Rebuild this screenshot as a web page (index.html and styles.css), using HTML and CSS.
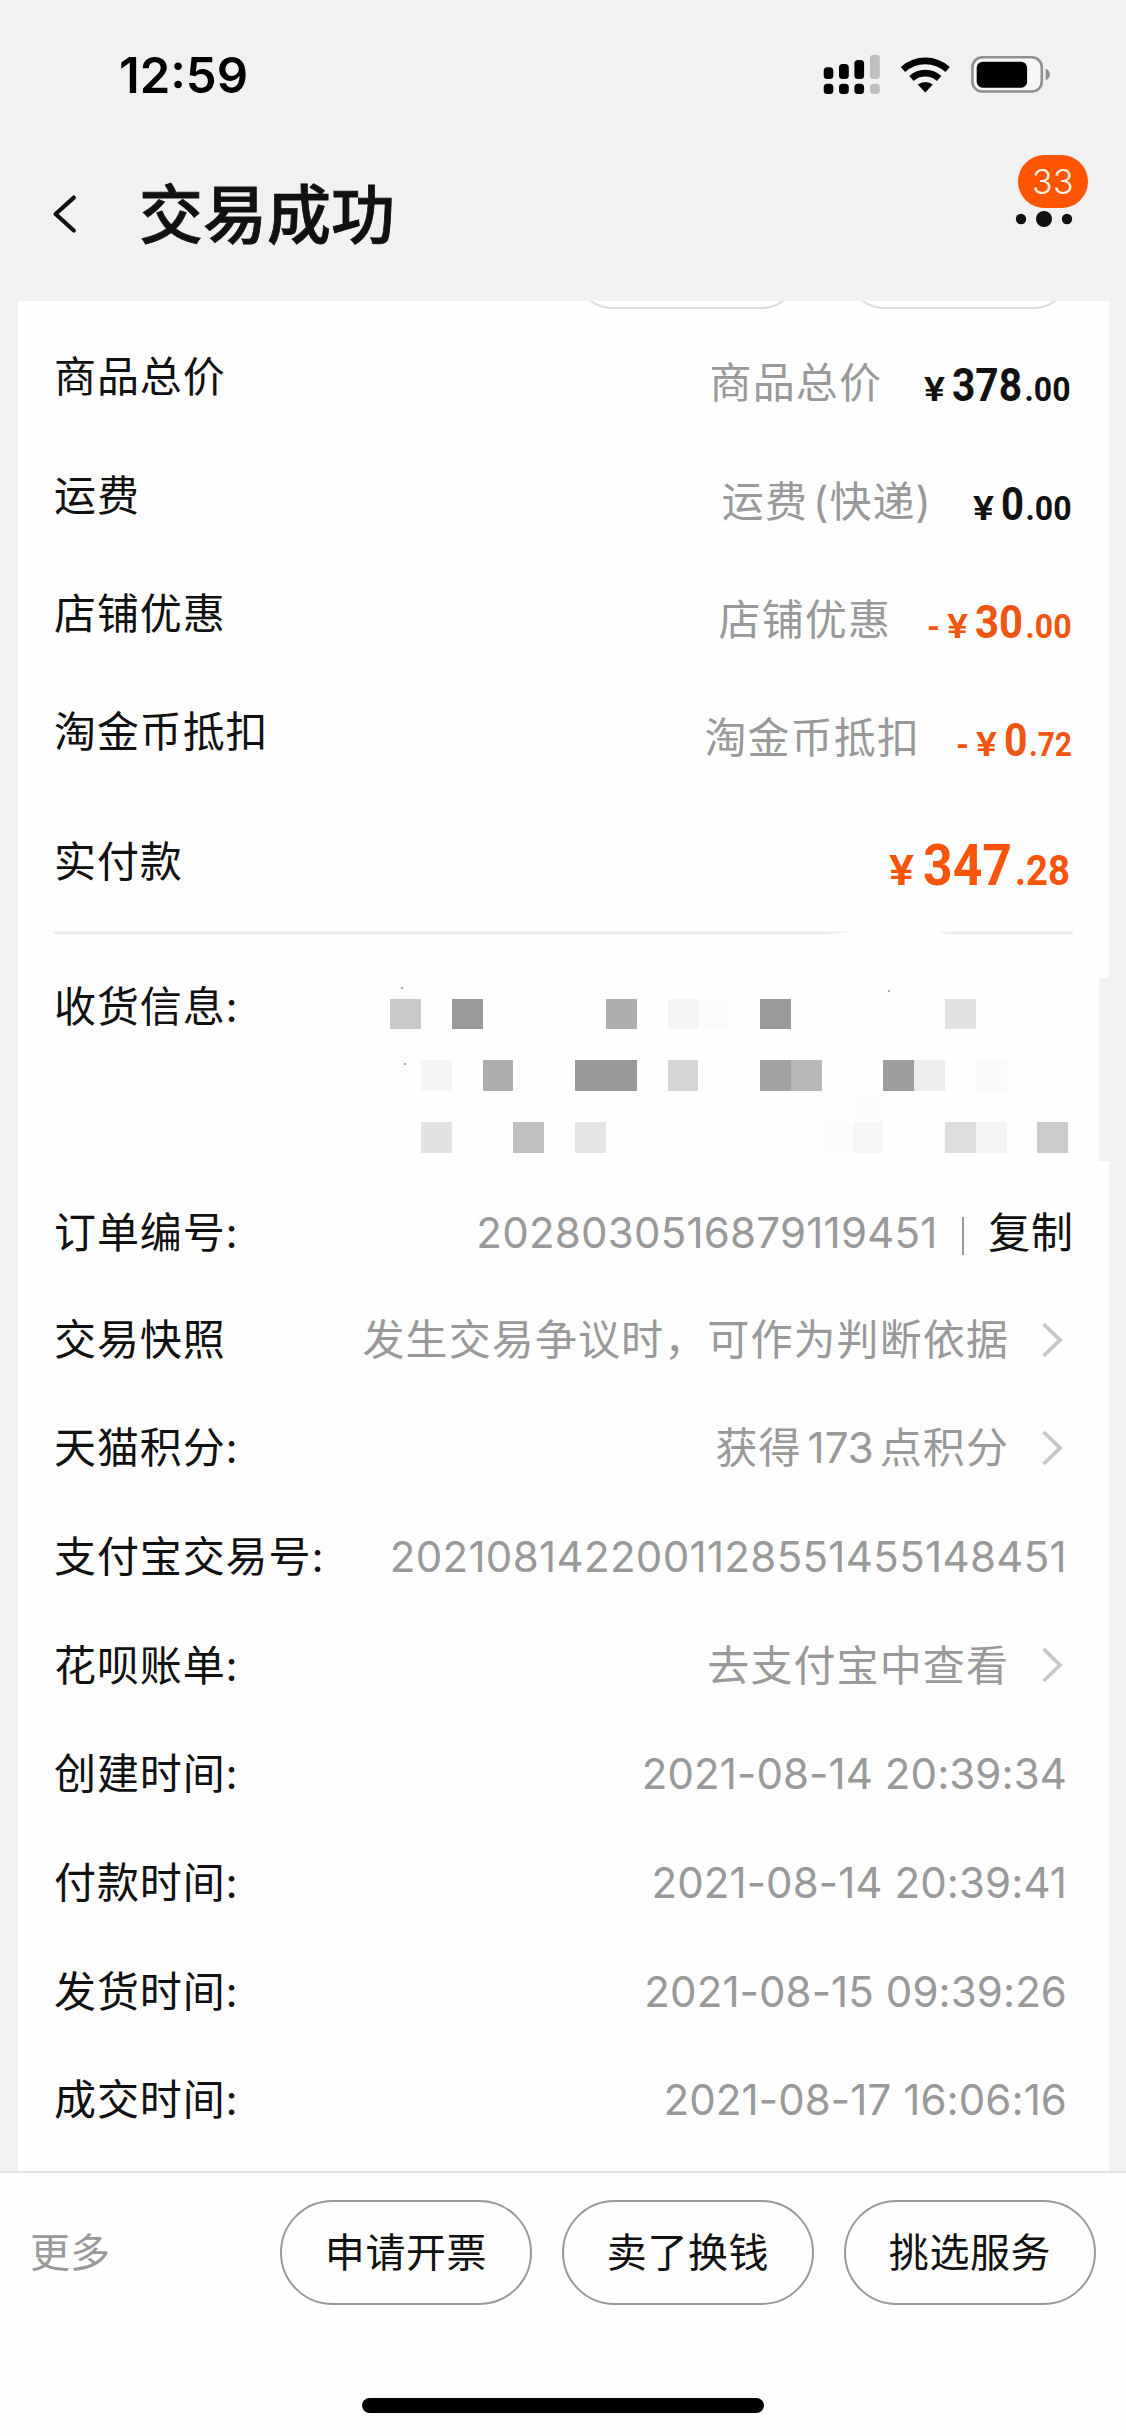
FILE: index.html
```html
<!DOCTYPE html>
<html lang="zh-CN">
<head>
<meta charset="utf-8">
<title>交易成功</title>
<link rel="stylesheet" href="styles.css">
</head>
<body>
<div class="page">
  <header class="header">
    <div class="status">
      <span class="time">12:59</span>
      <svg class="status-icons" width="230" height="44" viewBox="820 52 230 44">
        <g fill="#000">
          <rect x="823.7" y="67.3" width="9.6" height="11.8" rx="3.6"/>
          <rect x="839" y="64" width="9.8" height="15.1" rx="3.6"/>
          <rect x="854.4" y="60" width="9.7" height="19.1" rx="3.6"/>
          <rect x="823.7" y="83.8" width="9.6" height="10.3" rx="3.6"/>
          <rect x="839" y="83.8" width="9.8" height="10.3" rx="3.6"/>
          <rect x="854.4" y="83.8" width="9.7" height="10.3" rx="3.6"/>
        </g>
        <g fill="#bfbfbf">
          <rect x="870" y="54.7" width="9.8" height="24.4" rx="3.6"/>
          <rect x="870" y="83.8" width="9.8" height="10.3" rx="3.6"/>
        </g>
        <g fill="none" stroke="#000" stroke-width="6.6">
          <path d="M903 69.5A33 33 0 0 1 947.600 69.500"/>
          <path d="M911.500 78.500A20.500 20.500 0 0 1 939.100 78.500"/>
        </g>
        <path d="M917.800 84.600A12.500 12.500 0 0 1 932.800 84.600L925.300 92.400Z" fill="#000"/>
        <rect x="972.400" y="57.300" width="69.400" height="34.200" rx="10" fill="#f6f6f6" stroke="#8f8f8f" stroke-width="2.600"/>
        <rect x="976.700" y="61.700" width="50.400" height="26" rx="6" fill="#000"/>
        <path d="M1045.700 68.800C1051.200 70.500 1051.200 78.500 1045.700 80.200Z" fill="#8f8f8f"/>
      </svg>
    </div>
    <div class="nav">
      <svg class="back" width="26" height="42" viewBox="52 193 26 42"><path d="M73.800 197.600L55.600 214L73.800 230.500" fill="none" stroke="#111" stroke-width="4.200" stroke-linecap="round" stroke-linejoin="round"/></svg>
      <h1 class="title">交易成功</h1>
      <div class="menu">
        <svg width="58" height="18" viewBox="0 0 58 18" fill="#111"><circle cx="6" cy="9" r="5.200"/><circle cx="29" cy="9" r="8"/><circle cx="52" cy="9" r="5.200"/></svg>
        <span class="badge">33</span>
      </div>
    </div>
  </header>

  <main class="card">
    <div class="clipped"><span class="clipped-pill"></span><span class="clipped-pill"></span></div>

    <section class="prices">
      <div class="row price-row">
        <span class="label">商品总价</span>
        <span class="note">商品总价</span>
        <svg class="price" width="148" height="44" viewBox="0 0 148 44">
          <text class="small yen" x="0" y="38" textLength="21" lengthAdjust="spacingAndGlyphs">¥</text>
          <text class="big" x="28" y="38" textLength="70" lengthAdjust="spacingAndGlyphs">378</text>
          <text class="small" x="100.500" y="38" textLength="46" lengthAdjust="spacingAndGlyphs">.00</text>
        </svg>
      </div>
      <div class="row price-row">
        <span class="label">运费</span>
        <span class="note note-shipping">运费 (快递)</span>
        <svg class="price" width="99" height="44" viewBox="0 0 99 44">
          <text class="small yen" x="0" y="38" textLength="21" lengthAdjust="spacingAndGlyphs">¥</text>
          <text class="big" x="28" y="38" textLength="23" lengthAdjust="spacingAndGlyphs">0</text>
          <text class="small" x="52.500" y="38" textLength="46" lengthAdjust="spacingAndGlyphs">.00</text>
        </svg>
      </div>
      <div class="row price-row">
        <span class="label">店铺优惠</span>
        <span class="note note-shop">店铺优惠</span>
        <svg class="price orange" width="145" height="44" viewBox="0 0 145 44">
          <text class="small" x="0" y="38" textLength="13" lengthAdjust="spacingAndGlyphs">-</text>
          <text class="small yen" x="20" y="38" textLength="21" lengthAdjust="spacingAndGlyphs">¥</text>
          <text class="big" x="48" y="38" textLength="48" lengthAdjust="spacingAndGlyphs">30</text>
          <text class="small" x="98.500" y="38" textLength="46" lengthAdjust="spacingAndGlyphs">.00</text>
        </svg>
      </div>
      <div class="row price-row">
        <span class="label">淘金币抵扣</span>
        <span class="note note-coin">淘金币抵扣</span>
        <svg class="price orange" width="116" height="44" viewBox="0 0 116 44">
          <text class="small" x="0" y="38" textLength="13" lengthAdjust="spacingAndGlyphs">-</text>
          <text class="small yen" x="20" y="38" textLength="21" lengthAdjust="spacingAndGlyphs">¥</text>
          <text class="big" x="48" y="38" textLength="23.500" lengthAdjust="spacingAndGlyphs">0</text>
          <text class="small" x="73" y="38" textLength="43" lengthAdjust="spacingAndGlyphs">.72</text>
        </svg>
      </div>
      <div class="row total-row">
        <span class="label">实付款</span>
        <svg class="total orange" width="184" height="56" viewBox="0 0 184 56">
          <text class="total-small yen" x="0" y="48" textLength="25" lengthAdjust="spacingAndGlyphs">¥</text>
          <text class="total-big" x="34" y="48" textLength="89" lengthAdjust="spacingAndGlyphs">347</text>
          <text class="total-small" x="126" y="48" textLength="55" lengthAdjust="spacingAndGlyphs">.28</text>
        </svg>
      </div>
    </section>

    <svg class="divider" width="1019" height="4" viewBox="54 930 1019 4"><path d="M54 930.400H856Q842 930.800 830 933.200H54ZM938 930.400H1073V933.200H948Q943 931.200 938 930.400Z" fill="#ececec"/></svg>

    <section class="address">
      <span class="label">收货信息:</span>
      <svg class="mosaic" width="690" height="172" viewBox="388 984 690 172" shape-rendering="crispEdges">
        <g transform="translate(390.200 998.500) scale(30.820)">
          <rect x="0" y="0" width="1" height="1" fill="#c9c9c9"/><rect x="2" y="0" width="1" height="1" fill="#999"/><rect x="7" y="0" width="1" height="1" fill="#aeaeae"/><rect x="9" y="0" width="1" height="1" fill="#f4f4f4"/><rect x="10" y="0" width="1" height="1" fill="#fbfbfb"/><rect x="12" y="0" width="1" height="1" fill="#999"/><rect x="18" y="0" width="1" height="1" fill="#e2e2e2"/>
          <rect x="1" y="2" width="1" height="1" fill="#f5f5f5"/><rect x="3" y="2" width="1" height="1" fill="#adadad"/><rect x="6" y="2" width="2" height="1" fill="#989898"/><rect x="9" y="2" width="1" height="1" fill="#d5d5d5"/><rect x="12" y="2" width="1" height="1" fill="#a2a2a2"/><rect x="13" y="2" width="1" height="1" fill="#b8b8b8"/><rect x="16" y="2" width="1" height="1" fill="#9d9d9d"/><rect x="17" y="2" width="1" height="1" fill="#ededed"/><rect x="19" y="2" width="1" height="1" fill="#fafafa"/>
          <rect x="15" y="3" width="1" height="1" fill="#fcfcfc"/>
          <rect x="1" y="4" width="1" height="1" fill="#e2e2e2"/><rect x="4" y="4" width="1" height="1" fill="#bfbfbf"/><rect x="6" y="4" width="1" height="1" fill="#e3e3e3"/><rect x="14" y="4" width="1" height="1" fill="#fcfcfc"/><rect x="15" y="4" width="1" height="1" fill="#f6f6f6"/><rect x="18" y="4" width="1" height="1" fill="#dedede"/><rect x="19" y="4" width="1" height="1" fill="#f4f4f4"/><rect x="21" y="4" width="1" height="1" fill="#ccc"/>
        </g>
        <g fill="#aaa"><rect x="401" y="987" width="2" height="2"/><rect x="888" y="990" width="2" height="2"/><rect x="404" y="1063" width="2" height="2"/></g>
      </svg>
      <span class="notch"></span>
    </section>

    <section class="details">
      <div class="row detail first"><span class="label">订单编号:</span><span class="value order">2028030516879119451</span><span class="bar"></span><span class="copy">复制</span></div>
      <div class="row detail first"><span class="label">交易快照</span><span class="value linked">发生交易争议时，可作为判断依据</span><svg class="arrow" width="22" height="36" viewBox="0 0 22 36"><path d="M2.500 2L19 18L2.500 34"/></svg></div>
      <div class="row detail"><span class="label">天猫积分:</span><span class="value linked">获得<span class="points">173</span>点积分</span><svg class="arrow" width="22" height="36" viewBox="0 0 22 36"><path d="M2.500 2L19 18L2.500 34"/></svg></div>
      <div class="row detail"><span class="label">支付宝交易号:</span><span class="value trade">2021081422001128551455148451</span></div>
      <div class="row detail"><span class="label">花呗账单:</span><span class="value linked">去支付宝中查看</span><svg class="arrow" width="22" height="36" viewBox="0 0 22 36"><path d="M2.500 2L19 18L2.500 34"/></svg></div>
      <div class="row detail"><span class="label">创建时间:</span><span class="value date">2021-08-14 20:39:34</span></div>
      <div class="row detail"><span class="label">付款时间:</span><span class="value date">2021-08-14 20:39:41</span></div>
      <div class="row detail"><span class="label">发货时间:</span><span class="value date">2021-08-15 09:39:26</span></div>
      <div class="row detail"><span class="label">成交时间:</span><span class="value date">2021-08-17 16:06:16</span></div>
    </section>
  </main>

  <footer class="footer">
    <div class="actions">
      <span class="more">更多</span>
      <button class="action">申请开票</button>
      <button class="action">卖了换钱</button>
      <button class="action">挑选服务</button>
    </div>
    <div class="home-indicator"></div>
  </footer>
</div>
</body>
</html>
```
FILE: styles.css
```css
* { box-sizing: border-box; }

body {
  margin: 0;
  background: #f1f1f1;
  color: #111;
  font-family: Inter, "Noto Sans CJK SC", sans-serif;
}

.page {
  display: flex;
  flex-direction: column;
  width: 1126px;
  height: 2436px;
  overflow: hidden;
}

.header { flex: none; height: 301px; }

.status {
  display: flex;
  justify-content: space-between;
  height: 132px;
  padding: 52px 76px 0 119px;
}

.time {
  color: #000;
  font-size: 49px;
  font-weight: 600;
  line-height: 47px;
}

.status-icons { display: block; }

.nav {
  display: flex;
  align-items: center;
  height: 164px;
  padding: 0 53px 0 52px;
}

.back { display: block; }

.title {
  margin: 1px auto 0 61px;
  font-size: 64px;
  font-weight: 500;
  line-height: 80px;
  -webkit-text-stroke: 0.8px #111;
}

.menu { position: relative; height: 18px; margin-top: 9px; }
.menu svg { display: block; }

.badge {
  position: absolute;
  top: -55px;
  left: 3px;
  width: 70px;
  height: 53px;
  border-radius: 27px;
  background: #ff5400;
  color: #fff3e6;
  font-size: 34px;
  font-weight: 350;
  line-height: 53px;
  letter-spacing: 0.5px;
  text-align: center;
}

.card {
  flex: none;
  width: 1091px;
  height: 1870px;
  margin-left: 18px;
  background: #fefefe;
}

/* bottom edges of the buttons scrolled under the header */
.clipped {
  display: flex;
  align-items: flex-end;
  justify-content: flex-end;
  gap: 46px;
  height: 8px;
  padding-right: 37px;
  overflow: hidden;
}

.clipped-pill {
  flex: none;
  width: 226px;
  height: 78px;
  border: 2px solid #dcdcdc;
  border-radius: 39px;
}

.prices { padding-top: 7px; }

.row { display: flex; align-items: center; padding: 0 35px 0 36px; }

.label, .note, .value, .copy {
  font-size: 42px;
  line-height: 60px;
  letter-spacing: 0.9px;
  white-space: nowrap;
}

.label { margin-right: auto; }

.price-row { height: 118.4px; }
.prices .label { margin-top: 4px; }

.note { margin: 16px 42px 0 0; color: #999; letter-spacing: 1.1px; }
.note-shipping { margin-right: 41px; word-spacing: -8px; }
.note-shop { margin-right: 36px; }
.note-coin { margin-right: 36px; }

.price { display: block; margin: 20px 2px 0 0; overflow: visible; fill: #111; }
.price text, .total text {
  font-family: Roboto, sans-serif;
  font-weight: 700;
}
.price .yen, .total .yen { font-weight: 600; }
.orange { fill: #f05511; }
.small { font-size: 34px; }
.big { font-size: 47px; }

.total-row { height: 141px; }
.total { display: block; margin: 10px 1px 0 0; overflow: visible; }
.total.orange { fill: #f8540a; }
.total-small { font-size: 42px; }
.total-big { font-size: 58px; }

.divider { display: block; margin-left: 36px; }

.address {
  position: relative;
  display: flex;
  align-items: flex-start;
  height: 244px;
  padding: 0 31px 0 36px;
}
.address .label { margin-top: 42px; }
.mosaic { display: block; margin-top: 49px; }

.notch {
  position: absolute;
  top: 43px;
  right: 0;
  width: 10px;
  height: 183px;
  background: #f1f1f1;
}

.detail { height: 108.7px; }
.detail.first { height: 107.4px; }
.detail .label, .detail .value, .copy { padding-top: 1px; }

.value { color: #999; }
.order { letter-spacing: 0.25px; }
.trade { margin-right: 7px; letter-spacing: 0.34px; }
.date { margin-right: 7px; letter-spacing: 0.1px; }
.linked { margin-right: 32px; letter-spacing: 1.1px; }
.points { margin: 0 6px; letter-spacing: 0; }

.bar { width: 2.5px; height: 38px; margin: 8px 24px 0 24px; background: #999; }

.arrow {
  display: block;
  margin-right: 11px;
  fill: none;
  stroke: #c8c8c8;
  stroke-width: 3.8;
}

.footer {
  flex: none;
  height: 265px;
  border-top: 2px solid #e3e3e3;
  background: #fefefe;
}

.actions {
  display: flex;
  align-items: center;
  gap: 30px;
  height: 159px;
  padding: 0 30px 0 30px;
}

.more { margin-right: auto; color: #999; font-size: 40px; line-height: 60px; }

.action {
  width: 252px;
  height: 105px;
  padding: 0;
  border: 2px solid #999;
  border-radius: 53px;
  background: transparent;
  color: #111;
  font-family: inherit;
  font-size: 40px;
  line-height: 60px;
  letter-spacing: 0.6px;
}

.home-indicator {
  width: 402px;
  height: 15px;
  margin: 66px auto 0;
  border-radius: 8px;
  background: #000;
}
```
